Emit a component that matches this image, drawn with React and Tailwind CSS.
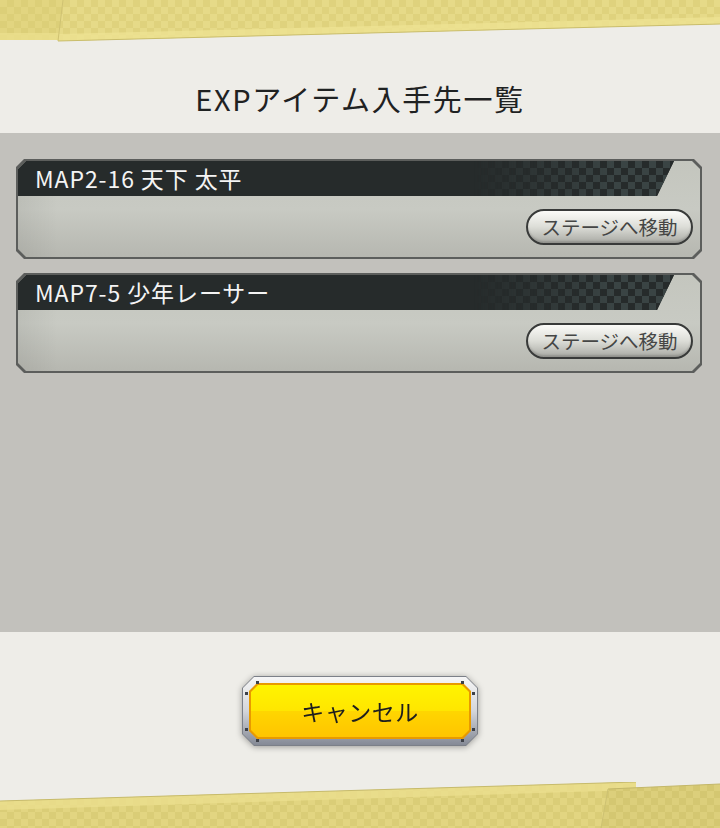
const FONT = { fontFamily: "'Noto Sans CJK JP', 'Noto Sans', sans-serif" };

const STAGES = [
  { id: 1, name: "MAP2-16 天下 太平" },
  { id: 2, name: "MAP7-5 少年レーサー" },
];

const chamfer8 =
  "[clip-path:polygon(8px_0,calc(100%-8px)_0,100%_8px,100%_calc(100%-8px),calc(100%-8px)_100%,8px_100%,0_calc(100%-8px),0_8px)]";

function Checker({ id, a, b }) {
  return (
    <pattern id={id} width="14" height="14" patternUnits="userSpaceOnUse">
      <rect width="14" height="14" fill={a} />
      <rect width="7" height="7" fill={b} />
      <rect x="7" y="7" width="7" height="7" fill={b} />
    </pattern>
  );
}

function TopBand() {
  return (
    <svg width="720" height="42" viewBox="0 0 720 42" className="block">
      <defs>
        <Checker id="ct1" a="#dccf78" b="#e2d580" />
        <Checker id="ct2" a="#dfd27d" b="#e6da88" />
      </defs>
      <polygon points="0,0 80,0 80,40 0,40" fill="url(#ct1)" />
      <polygon points="0,33 80,33 80,40 0,40" fill="#ebdf8c" opacity="0.8" />
      <polygon points="63,0 720,0 720,24 58,41" fill="url(#ct2)" />
      <polygon points="59,34 720,17 720,24 58,41" fill="#eee292" opacity="0.8" />
      <line x1="58" y1="41" x2="720" y2="24" stroke="#c9bd6c" strokeWidth="1" />
      <line x1="63" y1="0" x2="58" y2="41" stroke="#cfc272" strokeWidth="1" />
    </svg>
  );
}

function BottomBand() {
  return (
    <svg width="720" height="46" viewBox="0 782 720 46" className="block">
      <defs>
        <Checker id="cb1" a="#dacd77" b="#e2d581" />
        <Checker id="cb2" a="#d4c771" b="#dccf7b" />
      </defs>
      <polygon points="0,801 636,782 636,828 0,828" fill="url(#cb1)" />
      <polygon points="0,801 636,782 636,790 0,810" fill="#ebdf8d" opacity="0.8" />
      <line x1="0" y1="801" x2="636" y2="782" stroke="#c7bb6c" strokeWidth="1" />
      <polygon points="608,789 720,784 720,828 601,828" fill="url(#cb2)" />
      <line x1="608" y1="789" x2="720" y2="784" stroke="#c3b769" strokeWidth="1" />
      <line x1="608" y1="789" x2="601" y2="828" stroke="#cdc172" strokeWidth="1" />
    </svg>
  );
}

function StageCard({ name }) {
  return (
    <div className={`bg-[#5c5e5c] p-[2px] h-[100px] ${chamfer8}`}>
      <div
        className={`relative h-full flex flex-col bg-gradient-to-b from-[#c4c6be] via-[#c8cac3] to-[#b6b7b0] ${chamfer8}`}
      >
        <div className="absolute inset-y-0 left-0 w-[40px] bg-gradient-to-r from-[rgba(0,0,0,0.06)] to-transparent" />
        <div className="relative h-[35px] mr-[26px] bg-[#262b2b] flex items-center pl-[17px] [clip-path:polygon(0_0,100%_0,calc(100%-17px)_100%,0_100%)]">
          <div className="absolute inset-y-0 right-0 w-[200px] bg-[repeating-conic-gradient(#3a4444_0_25%,#262b2b_0_50%)] bg-[length:14px_14px] [mask-image:linear-gradient(to_right,transparent,black_70%)]" />
          <span className="relative text-[#f4f4f4] text-[23px] leading-none tracking-[0.9px]" style={FONT}>
            {name}
          </span>
        </div>
        <div className="relative flex-1 flex items-center justify-end pr-[7px]">
          <button
            className="h-[36px] w-[167px] rounded-full border-2 border-[#383a39] bg-gradient-to-b from-[#fbfbf8] via-[#dcddd7] to-[#a9aaa4] flex items-center justify-center shadow-[inset_0_-2px_2px_rgba(0,0,0,0.15)]"
            style={FONT}
          >
            <span className="text-[19.5px] leading-none text-[#454645]">ステージへ移動</span>
          </button>
        </div>
      </div>
    </div>
  );
}

function Rivet({ className }) {
  return <div className={`absolute w-[3px] h-[3px] bg-[#3e4148] ${className}`} />;
}

function CancelButton() {
  return (
    <div className="relative drop-shadow-[0_1px_3px_rgba(0,0,0,0.35)]">
      <div className="w-[236px] h-[70px] bg-[#7c8088] p-[1px] [clip-path:polygon(12px_0,calc(100%-12px)_0,100%_12px,100%_calc(100%-12px),calc(100%-12px)_100%,12px_100%,0_calc(100%-12px),0_12px)]">
        <div className="w-full h-full p-[6px] bg-gradient-to-b from-[#f6f6f6] via-[#d4d6da] to-[#858a96] [clip-path:polygon(11px_0,calc(100%-11px)_0,100%_11px,100%_calc(100%-11px),calc(100%-11px)_100%,11px_100%,0_calc(100%-11px),0_11px)]">
          <div className="w-full h-full p-[2px] bg-[#e89a00] [clip-path:polygon(8px_0,calc(100%-8px)_0,100%_8px,100%_calc(100%-8px),calc(100%-8px)_100%,8px_100%,0_calc(100%-8px),0_8px)]">
            <div className="w-full h-full flex flex-col [clip-path:polygon(7px_0,calc(100%-7px)_0,100%_7px,100%_calc(100%-7px),calc(100%-7px)_100%,7px_100%,0_calc(100%-7px),0_7px)]">
              <div className="relative flex-1 flex items-center justify-center">
                <div className="absolute inset-0 flex flex-col">
                  <div className="flex-1 bg-gradient-to-b from-[#fff400] to-[#ffe600]" />
                  <div className="flex-1 bg-gradient-to-b from-[#ffd600] to-[#ffc400]" />
                </div>
                <span className="relative text-[23px] leading-none text-[#1e1e1e] tracking-[0.5px]" style={FONT}>
                  キャンセル
                </span>
              </div>
            </div>
          </div>
        </div>
      </div>
      <Rivet className="left-[14px] top-[5px]" />
      <Rivet className="left-[3px] top-[16px]" />
      <Rivet className="left-[3px] top-[52px]" />
      <Rivet className="left-[14px] top-[63px]" />
      <Rivet className="right-[14px] top-[5px]" />
      <Rivet className="right-[3px] top-[16px]" />
      <Rivet className="right-[3px] top-[52px]" />
      <Rivet className="right-[14px] top-[63px]" />
    </div>
  );
}

export default function App() {
  return (
    <div className="w-[720px] h-[828px] flex flex-col bg-[#eeede8] overflow-hidden" style={FONT}>
      <TopBand />
      <div className="h-[91px] pt-[40px] text-center">
        <h1 className="text-[29px] leading-[32px] tracking-[1.6px] text-[#1f2222]">EXPアイテム入手先一覧</h1>
      </div>

      <div className="h-[499px] bg-[#c2c1bc] pt-[26px] pl-[16px] pr-[18px] flex flex-col gap-[14px]">
        {STAGES.map((s) => (
          <StageCard key={s.id} name={s.name} />
        ))}
      </div>

      <div className="flex-1 flex justify-center pt-[44px]">
        <CancelButton />
      </div>
      <BottomBand />
    </div>
  );
}
